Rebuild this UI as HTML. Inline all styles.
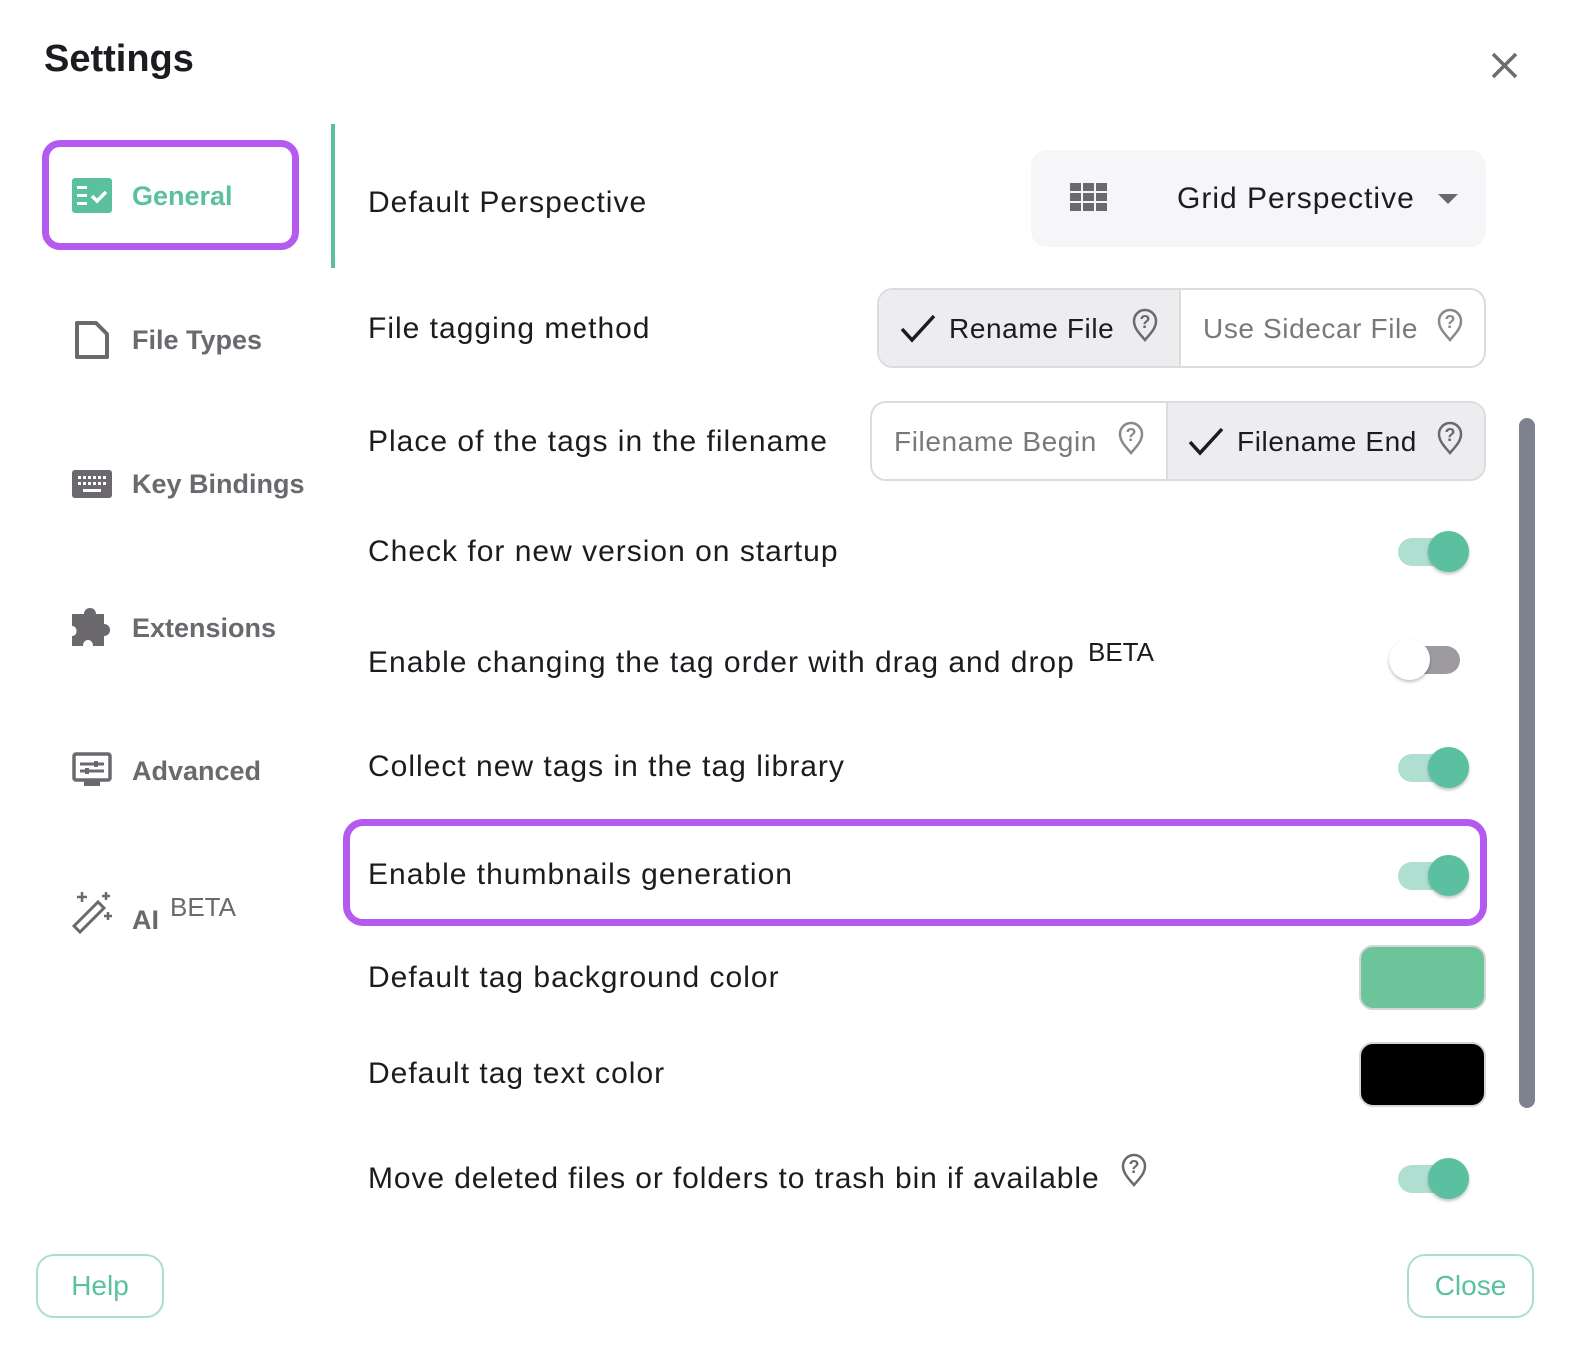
<!DOCTYPE html>
<html><head><meta charset="utf-8"><style>
*{box-sizing:border-box;margin:0;padding:0}
body{width:1570px;height:1354px;background:#fff;position:relative;overflow:hidden;font-family:"Liberation Sans",sans-serif;color:#1d1b20}
.a{position:absolute;white-space:nowrap}
.t{font-size:30px;line-height:30px;color:#1d1b20;letter-spacing:1px}
.b{font-size:28px;letter-spacing:0.6px}
.nav{font-size:27px;font-weight:bold;color:#6b696e;line-height:30px}
.tog{position:absolute;width:70px;height:28px}
.tog .tr{position:absolute;left:3px;top:0;width:66px;height:28px;border-radius:14px;background:#aedfd0}
.tog .kn{position:absolute;left:33px;top:-7px;width:41px;height:41px;border-radius:50%;background:#5bc0a0;box-shadow:0 2px 3px rgba(0,0,0,.25)}
</style></head><body>
<div class="a" style="left:44px;top:38px;font-size:38px;font-weight:bold;color:#1d1b20;line-height:42px">Settings</div>
<svg class="a" style="left:1488px;top:49px" width="33" height="33"><path d="M5 5L28 28M28 5L5 28" stroke="#6d6b70" stroke-width="3.5"/></svg>

<div class="a" style="left:42px;top:140px;width:257px;height:110px;border:7px solid #b55af0;border-radius:18px"></div>
<svg class="a" style="left:72px;top:178px" width="40" height="35"><rect width="40" height="35" rx="3" fill="#5bc0a0"/><rect x="5" y="8" width="10" height="3" fill="#fff"/><rect x="5" y="16" width="10" height="3" fill="#fff"/><rect x="5" y="24" width="10" height="3" fill="#fff"/><path d="M20 18l5 5 9-9" stroke="#fff" stroke-width="3.5" fill="none"/></svg>
<div class="a nav" style="left:132px;top:181px;color:#5bc0a0">General</div>
<div class="a" style="left:331px;top:124px;width:4px;height:144px;background:#5bc0a0"></div>

<svg class="a" style="left:74px;top:320px" width="36" height="40"><path d="M3 3H22L33 14V37H3Z" fill="none" stroke="#6b696e" stroke-width="4" stroke-linejoin="round"/></svg>
<div class="a nav" style="left:132px;top:325px">File Types</div>

<svg class="a" style="left:72px;top:470px" width="40" height="28"><rect width="40" height="28" rx="3" fill="#6b696e"/><g fill="#fff"><rect x="6" y="6" width="3" height="3"/><rect x="11" y="6" width="3" height="3"/><rect x="16" y="6" width="3" height="3"/><rect x="21" y="6" width="3" height="3"/><rect x="26" y="6" width="3" height="3"/><rect x="31" y="6" width="3" height="3"/><rect x="6" y="12" width="3" height="3"/><rect x="11" y="12" width="3" height="3"/><rect x="16" y="12" width="3" height="3"/><rect x="21" y="12" width="3" height="3"/><rect x="26" y="12" width="3" height="3"/><rect x="31" y="12" width="3" height="3"/><rect x="11" y="19" width="18" height="3"/></g></svg>
<div class="a nav" style="left:132px;top:469px">Key Bindings</div>

<svg class="a" style="left:71px;top:604px" width="44" height="44"><path d="M1 10H13C13 2 25 2 25 10H33V20C41 20 41 32 33 32V42H22C22 34 12 34 12 42H1V32C7 32 7 22 1 22Z" fill="#6b696e"/></svg>
<div class="a nav" style="left:132px;top:613px">Extensions</div>

<svg class="a" style="left:72px;top:752px" width="40" height="36"><rect x="2" y="2" width="36" height="26" rx="2" fill="none" stroke="#6b696e" stroke-width="3.5"/><rect x="12" y="28" width="16" height="6" fill="#6b696e"/><path d="M8 12H32M8 19H32" stroke="#6b696e" stroke-width="3"/><rect x="22" y="9" width="4" height="6" fill="#6b696e"/><rect x="13" y="16" width="4" height="6" fill="#6b696e"/></svg>
<div class="a nav" style="left:132px;top:756px">Advanced</div>

<svg class="a" style="left:70px;top:890px" width="46" height="46"><path d="M4 40L28 16L34 22L10 46Z" fill="none" stroke="#6b696e" stroke-width="3" transform="translate(0,-4)"/><path d="M12 2v10M7 7h10M36 2v8M32 6h8M38 22v8M34 26h8" stroke="#6b696e" stroke-width="2.5"/></svg>
<div class="a nav" style="left:132px;top:905px">AI</div>
<div class="a" style="left:170px;top:893px;font-size:26px;color:#6b696e;line-height:28px">BETA</div>

<div class="a t" style="left:368px;top:188px">Default Perspective</div>
<div class="a" style="left:1031px;top:150px;width:455px;height:97px;background:#f6f5f8;border-radius:16px"></div>
<svg class="a" style="left:1070px;top:183px" width="38" height="29"><g fill="#6b696e"><rect x="0" y="0" width="11" height="8"/><rect x="13" y="0" width="11" height="8"/><rect x="26" y="0" width="11" height="8"/><rect x="0" y="10" width="11" height="8"/><rect x="13" y="10" width="11" height="8"/><rect x="26" y="10" width="11" height="8"/><rect x="0" y="20" width="11" height="8"/><rect x="13" y="20" width="11" height="8"/><rect x="26" y="20" width="11" height="8"/></g></svg>
<div class="a t" style="left:1177px;top:184px;font-size:30px">Grid Perspective</div>
<svg class="a" style="left:1437px;top:193px" width="22" height="12"><path d="M1 1H21L11 11Z" fill="#6b696e"/></svg>

<div class="a t" style="left:368px;top:314px">File tagging method</div>
<div class="a" style="left:877px;top:288px;width:609px;height:80px;border:2px solid #dcdbde;border-radius:16px;overflow:hidden">
 <div style="position:absolute;left:0;top:0;width:302px;height:78px;background:#edecef;border-right:2px solid #dcdbde"></div>
</div>
<svg class="a" style="left:899px;top:312px" width="38" height="32"><path d="M3 17l10 11L35 4" fill="none" stroke="#1d1b20" stroke-width="3.5"/></svg>
<div class="a t b" style="left:949px;top:314px">Rename File</div>
<div class="a t b" style="left:1203px;top:314px;color:#7a787d">Use Sidecar File</div>

<div class="a t" style="left:368px;top:427px">Place of the tags in the filename</div>
<div class="a" style="left:870px;top:401px;width:616px;height:80px;border:2px solid #dcdbde;border-radius:16px;overflow:hidden">
 <div style="position:absolute;left:294px;top:0;width:322px;height:78px;background:#edecef;border-left:2px solid #dcdbde"></div>
</div>
<div class="a t b" style="left:894px;top:427px;color:#7a787d">Filename Begin</div>
<svg class="a" style="left:1187px;top:425px" width="38" height="32"><path d="M3 17l10 11L35 4" fill="none" stroke="#1d1b20" stroke-width="3.5"/></svg>
<div class="a t b" style="left:1237px;top:427px">Filename End</div>

<div class="a t" style="left:368px;top:537px">Check for new version on startup</div>
<div class="a t" style="left:368px;top:648px">Enable changing the tag order with drag and drop</div>
<div class="a" style="left:1088px;top:638px;font-size:26px;line-height:28px">BETA</div>
<div class="a t" style="left:368px;top:752px">Collect new tags in the tag library</div>
<div class="a" style="left:343px;top:819px;width:1144px;height:107px;border:7px solid #b55af0;border-radius:20px"></div>
<div class="a t" style="left:368px;top:860px">Enable thumbnails generation</div>
<div class="a t" style="left:368px;top:963px">Default tag background color</div>
<div class="a" style="left:1359px;top:945px;width:127px;height:65px;background:#6cc59a;border:2px solid #d6d5d8;border-radius:14px"></div>
<div class="a t" style="left:368px;top:1059px">Default tag text color</div>
<div class="a" style="left:1359px;top:1042px;width:127px;height:65px;background:#000;border:2px solid #d6d5d8;border-radius:14px"></div>
<div class="a t" style="left:368px;top:1164px;letter-spacing:0.9px">Move deleted files or folders to trash bin if available</div>

<svg class="a" style="left:1131px;top:307px" width="28" height="36"><path d="M14 33C8 26 3 21 3 14A11 11 0 0 1 25 14C25 21 20 26 14 33Z" fill="none" stroke="#6b696e" stroke-width="2.5"/><text x="14" y="21" font-size="18" font-weight="bold" text-anchor="middle" fill="#6b696e" font-family="Liberation Sans">?</text></svg>
<svg class="a" style="left:1436px;top:307px" width="28" height="36"><path d="M14 33C8 26 3 21 3 14A11 11 0 0 1 25 14C25 21 20 26 14 33Z" fill="none" stroke="#8a888d" stroke-width="2.5"/><text x="14" y="21" font-size="18" font-weight="bold" text-anchor="middle" fill="#8a888d" font-family="Liberation Sans">?</text></svg>
<svg class="a" style="left:1117px;top:420px" width="28" height="36"><path d="M14 33C8 26 3 21 3 14A11 11 0 0 1 25 14C25 21 20 26 14 33Z" fill="none" stroke="#8a888d" stroke-width="2.5"/><text x="14" y="21" font-size="18" font-weight="bold" text-anchor="middle" fill="#8a888d" font-family="Liberation Sans">?</text></svg>
<svg class="a" style="left:1436px;top:420px" width="28" height="36"><path d="M14 33C8 26 3 21 3 14A11 11 0 0 1 25 14C25 21 20 26 14 33Z" fill="none" stroke="#6b696e" stroke-width="2.5"/><text x="14" y="21" font-size="18" font-weight="bold" text-anchor="middle" fill="#6b696e" font-family="Liberation Sans">?</text></svg>
<svg class="a" style="left:1120px;top:1152px" width="28" height="36"><path d="M14 33C8 26 3 21 3 14A11 11 0 0 1 25 14C25 21 20 26 14 33Z" fill="none" stroke="#6b696e" stroke-width="2.5"/><text x="14" y="21" font-size="18" font-weight="bold" text-anchor="middle" fill="#6b696e" font-family="Liberation Sans">?</text></svg>

<div class="tog" style="left:1395px;top:538px"><div class="tr"></div><div class="kn"></div></div>
<div class="tog" style="left:1391px;top:646px"><div class="tr" style="background:#9d9ba0"></div><div class="kn" style="left:-2px;background:#fff"></div></div>
<div class="tog" style="left:1395px;top:754px"><div class="tr"></div><div class="kn"></div></div>
<div class="tog" style="left:1395px;top:862px"><div class="tr"></div><div class="kn"></div></div>
<div class="tog" style="left:1395px;top:1165px"><div class="tr"></div><div class="kn"></div></div>

<div class="a" style="left:1519px;top:418px;width:16px;height:690px;background:#7e8190;border-radius:8px"></div>

<div class="a" style="left:36px;top:1254px;width:128px;height:64px;border:2px solid #acdecd;border-radius:18px;color:#5bc0a0;font-size:28px;line-height:60px;text-align:center">Help</div>
<div class="a" style="left:1407px;top:1254px;width:127px;height:64px;border:2px solid #acdecd;border-radius:18px;color:#5bc0a0;font-size:28px;line-height:60px;text-align:center">Close</div>
</body></html>
